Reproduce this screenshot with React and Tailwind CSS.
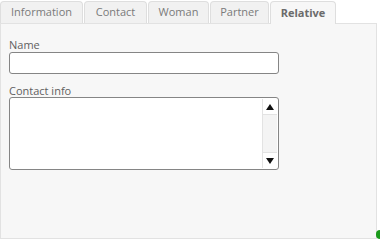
import React from "react";

const tabs = [
  { label: "Information", w: "w-[83px]" },
  { label: "Contact", w: "w-[63px]" },
  { label: "Woman", w: "w-[61px]" },
  { label: "Partner", w: "w-[59px]" },
  { label: "Relative", w: "w-[66px]", active: true },
];

const Scroll = () => (
  <div className="flex w-[15px] flex-col border-l border-[#e3e3e3] bg-[#f4f4f4]">
    <div className="flex h-[16px] items-center justify-center border-b border-[#e3e3e3] bg-white">
      <svg width="8" height="6" viewBox="0 0 8 6"><path d="M4 0L8 6H0z" fill="#111" /></svg>
    </div>
    <div className="flex-1" />
    <div className="flex h-[16px] items-center justify-center border-t border-[#e3e3e3] bg-white">
      <svg width="8" height="6" viewBox="0 0 8 6"><path d="M0 0H8L4 6z" fill="#111" /></svg>
    </div>
  </div>
);

export default function App() {
  return (
    <div className="h-[240px] w-[380px] bg-white pt-px font-['Open_Sans',sans-serif] text-[11px]">
      <div className="flex gap-[1px]">
        {tabs.map((t) => (
          <div
            key={t.label}
            className={
              "relative z-10 flex h-[22px] items-center justify-center rounded-t-[4px] border border-[#dedede] " +
              t.w +
              (t.active
                ? " -mb-px h-[23px] border-b-0 bg-[#f7f7f7] font-bold text-[#6b6b6b]"
                : " border-b-0 bg-[#f1f1f1] text-[#7a7a7a]")
            }
          >
            {t.label}
          </div>
        ))}
      </div>
      <div className="flex h-[216px] w-[377px] flex-col border border-[#e2e2e2] bg-[#f7f7f7] px-[8px] pt-[15px]">
        <label className="leading-[12px] text-[#5f5f5f]">Name</label>
        <div className="mt-[1px] h-[22px] w-[270px] rounded-[3px] border border-[#858585] bg-white" />
        <label className="mt-[11px] leading-[12px] text-[#5f5f5f]">Contact info</label>
        <div className="mt-0 flex h-[73px] w-[270px] rounded-[3px] border border-[#858585] bg-white p-px">
          <div className="flex-1" />
          <Scroll />
        </div>
      </div>
      <div className="absolute left-[376px] top-[230px] h-[9px] w-[4px] rounded-l-full bg-[#1a9a1a]" />
    </div>
  );
}
